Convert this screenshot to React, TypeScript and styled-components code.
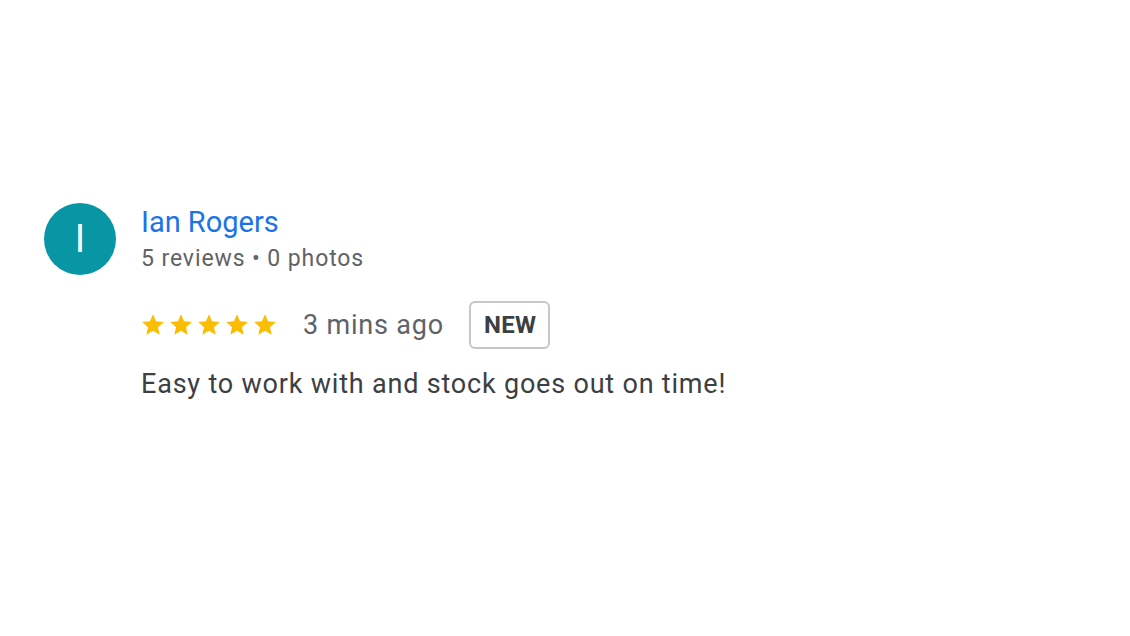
import styled, { createGlobalStyle } from "styled-components"

const GlobalStyle = createGlobalStyle`
  html, body {
    margin: 0;
    padding: 0;
    background: #ffffff;
    font-family: Roboto, "Liberation Sans", Arial, sans-serif;
  }
`

const Star = () => (
  <svg width="26" height="26" viewBox="0 0 24 24">
    <path
      fill="#fbbc04"
      d="M12 17.27L18.18 21l-1.64-7.03L22 9.24l-7.19-.61L12 2 9.19 8.63 2 9.24l5.46 4.73L5.82 21z"
    />
  </svg>
)

const App = () => (
  <>
    <GlobalStyle />
    <Page>
      <Review>
        <Avatar>I</Avatar>
        <Body>
          <Name>Ian Rogers</Name>
          <Meta>5 reviews • 0 photos</Meta>
          <RatingRow>
            <Stars>
              {[0, 1, 2, 3, 4].map((i) => (
                <Star key={i} />
              ))}
            </Stars>
            <Time>3 mins ago</Time>
            <Badge>NEW</Badge>
          </RatingRow>
          <Text>Easy to work with and stock goes out on time!</Text>
        </Body>
      </Review>
    </Page>
  </>
)

const Page = styled.div`
  width: 1130px;
  height: 636px;
  padding: 203px 0 0 44px;
  box-sizing: border-box;
`

const Review = styled.div`
  display: flex;
  align-items: flex-start;
  gap: 25px;
`

const Avatar = styled.div`
  width: 72px;
  height: 72px;
  border-radius: 50%;
  background: #0896a5;
  color: #ffffff;
  font-size: 38px;
  display: flex;
  align-items: center;
  justify-content: center;
  flex-shrink: 0;
`

const Body = styled.div`
  display: flex;
  flex-direction: column;
`

const Name = styled.div`
  color: #1a73e8;
  font-size: 29px;
  line-height: 32px;
  margin-top: 3px;
`

const Meta = styled.div`
  color: #5f6368;
  font-size: 23px;
  line-height: 28px;
  letter-spacing: 0.9px;
  margin-top: 7px;
`

const RatingRow = styled.div`
  display: flex;
  align-items: center;
  margin-top: 28px;
`

const Stars = styled.div`
  display: flex;
  gap: 2px;
  margin-left: -1px;
`

const Time = styled.span`
  color: #5f6368;
  font-size: 27px;
  letter-spacing: 0.8px;
  margin-left: 25px;
`

const Badge = styled.span`
  margin-left: 25px;
  border: 2px solid #c4c7cb;
  border-radius: 6px;
  padding: 0 12px 0 13px;
  height: 44px;
  display: flex;
  align-items: center;
  font-weight: 700;
  font-size: 24px;
  letter-spacing: 0.3px;
  color: #3c4043;
`

const Text = styled.div`
  color: #3c4043;
  font-size: 27px;
  line-height: 34px;
  letter-spacing: 0.8px;
  margin-top: 18px;
`

export default App
